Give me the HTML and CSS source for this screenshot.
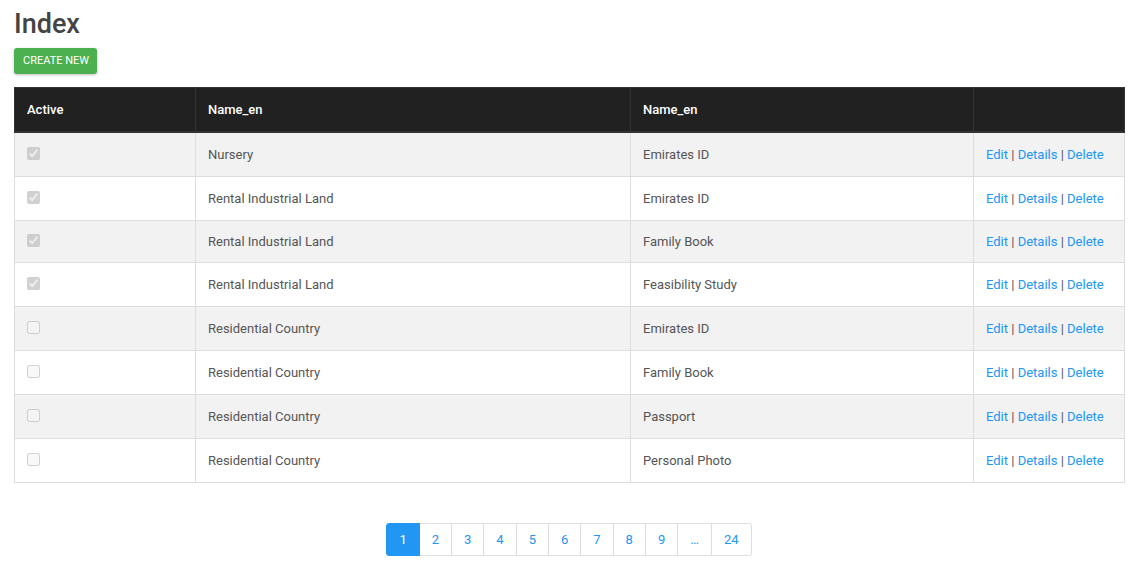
FILE: index.html
```html
<!DOCTYPE html>
<html>
<head>
<meta charset="utf-8">
<title>Index</title>
<link rel="stylesheet" href="styles.css">
</head>
<body>
<div class="page">
  <h2 class="title">Index</h2>
  <a class="btn-create" href="#">Create New</a>
  <table class="grid">
    <colgroup>
      <col class="c1"><col class="c2"><col class="c3"><col class="c4">
    </colgroup>
    <thead>
      <tr><th>Active</th><th>Name_en</th><th>Name_en</th><th></th></tr>
    </thead>
    <tbody>
      <tr><td><input type="checkbox" checked disabled></td><td>Nursery</td><td>Emirates ID</td><td class="acts"><a href="#">Edit</a> | <a href="#">Details</a> | <a href="#">Delete</a></td></tr>
      <tr><td><input type="checkbox" checked disabled></td><td>Rental Industrial Land</td><td>Emirates ID</td><td class="acts"><a href="#">Edit</a> | <a href="#">Details</a> | <a href="#">Delete</a></td></tr>
      <tr class="short"><td><input type="checkbox" checked disabled></td><td>Rental Industrial Land</td><td>Family Book</td><td class="acts"><a href="#">Edit</a> | <a href="#">Details</a> | <a href="#">Delete</a></td></tr>
      <tr><td><input type="checkbox" checked disabled></td><td>Rental Industrial Land</td><td>Feasibility Study</td><td class="acts"><a href="#">Edit</a> | <a href="#">Details</a> | <a href="#">Delete</a></td></tr>
      <tr><td><input type="checkbox" disabled></td><td>Residential Country</td><td>Emirates ID</td><td class="acts"><a href="#">Edit</a> | <a href="#">Details</a> | <a href="#">Delete</a></td></tr>
      <tr><td><input type="checkbox" disabled></td><td>Residential Country</td><td>Family Book</td><td class="acts"><a href="#">Edit</a> | <a href="#">Details</a> | <a href="#">Delete</a></td></tr>
      <tr><td><input type="checkbox" disabled></td><td>Residential Country</td><td>Passport</td><td class="acts"><a href="#">Edit</a> | <a href="#">Details</a> | <a href="#">Delete</a></td></tr>
      <tr><td><input type="checkbox" disabled></td><td>Residential Country</td><td>Personal Photo</td><td class="acts"><a href="#">Edit</a> | <a href="#">Details</a> | <a href="#">Delete</a></td></tr>
    </tbody>
  </table>
  <div class="pager-wrap">
    <ul class="pager">
      <li class="active"><a href="#">1</a></li>
      <li><a href="#">2</a></li>
      <li><a href="#">3</a></li>
      <li><a href="#">4</a></li>
      <li><a href="#">5</a></li>
      <li><a href="#">6</a></li>
      <li><a href="#">7</a></li>
      <li><a href="#">8</a></li>
      <li><a href="#">9</a></li>
      <li><a href="#">…</a></li>
      <li><a href="#">24</a></li>
    </ul>
  </div>
</div>
</body>
</html>
```

FILE: styles.css
```css
html, body {
  margin: 0;
  padding: 0;
  background: #fff;
}
body {
  font-family: Roboto, "Liberation Sans", Arial, sans-serif;
  font-size: 13px;
  color: #555;
}
.page {
  padding: 0 11px 0 14px;
}
.title {
  margin: 9px 0 0 0;
  font-size: 27px;
  line-height: 30px;
  font-weight: 500;
  color: #444;
}
.btn-create {
  display: inline-block;
  margin-top: 9px;
  height: 26px;
  line-height: 26px;
  padding: 0 8px 0 9px;
  background: #4caf50;
  color: #fff;
  font-size: 11px;
  text-transform: uppercase;
  text-decoration: none;
  border-radius: 3px;
  box-shadow: 0 1px 3px rgba(0,0,0,0.25);
}
.grid {
  margin-top: 13px;
  width: 1110px;
  border-collapse: collapse;
  table-layout: fixed;
}
.c1 { width: 181px; }
.c2 { width: 435px; }
.c3 { width: 343px; }
.c4 { width: 151px; }
.grid th {
  background: #212121;
  color: #fff;
  font-weight: 500;
  text-align: left;
  padding: 10px 12px 9px;
  line-height: 24px;
  border: 1px solid #333;
  border-bottom: 2px solid #333;
}
.grid td {
  padding: 10px 12px 9px;
  line-height: 24px;
  border: 1px solid #ddd;
  vertical-align: top;
}
.grid tr.short td {
  padding-top: 9px;
  padding-bottom: 8px;
}
.grid tbody tr:nth-child(odd) td {
  background: #f2f2f2;
}
.grid input[type=checkbox] {
  margin: 4px 0 0 0;
  width: 13px;
  height: 13px;
  vertical-align: top;
}
.acts a {
  color: #2196f3;
  text-decoration: none;
}
.pager-wrap {
  display: flex;
  justify-content: center;
  margin-top: 40px;
}
.pager {
  display: flex;
  list-style: none;
  margin: 0;
  padding: 0;
}
.pager li a {
  display: block;
  padding: 6px 12px;
  line-height: 19px;
  border: 1px solid #ddd;
  margin-left: -1px;
  color: #2196f3;
  text-decoration: none;
  background: #fff;
}
.pager li:first-child a {
  margin-left: 0;
  border-radius: 3px 0 0 3px;
}
.pager li:last-child a {
  border-radius: 0 3px 3px 0;
}
.pager li.active a {
  background: #2196f3;
  border-color: #2196f3;
  color: #fff;
  position: relative;
  z-index: 1;
}
```
